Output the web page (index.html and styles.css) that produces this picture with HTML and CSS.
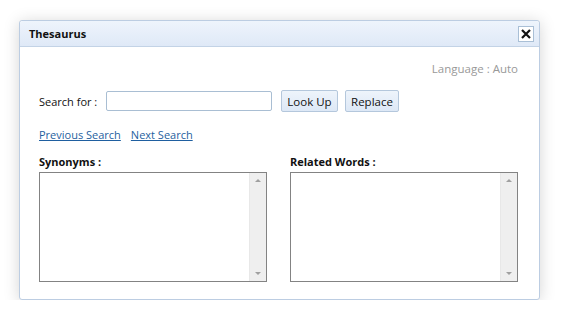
FILE: index.html
```html
<!DOCTYPE html>
<html lang="en">
<head>
  <meta charset="UTF-8">
  <title>Thesaurus</title>
  <link rel="stylesheet" href="styles.css">
</head>
<body>

<div class="dialog">
  <div class="dialog-head">
    <span class="dialog-title">Thesaurus</span>
    <button class="close-btn" title="Close">
      <svg width="10" height="10" viewBox="0 0 10 10"><path d="M1 1 L9 9 M9 1 L1 9" stroke="#111" stroke-width="2.2"/></svg>
    </button>
  </div>

  <div class="dialog-body">
    <div class="lang-row">Language : Auto</div>

    <div class="search-row">
      <label for="term">Search for :</label>
      <input id="term" type="text">
      <button class="btn btn-lookup">Look Up</button>
      <button class="btn btn-replace">Replace</button>
    </div>

    <div class="nav-links">
      <a href="#">Previous Search</a>
      <a href="#">Next Search</a>
    </div>

    <div class="lists">
      <div class="list-col">
        <div class="list-label">Synonyms :</div>
        <div class="listbox">
          <div class="listbox-content"></div>
          <div class="scrollbar"><span class="arrow up"></span><span class="arrow down"></span></div>
        </div>
      </div>
      <div class="list-col">
        <div class="list-label">Related Words :</div>
        <div class="listbox">
          <div class="listbox-content"></div>
          <div class="scrollbar"><span class="arrow up"></span><span class="arrow down"></span></div>
        </div>
      </div>
    </div>
  </div>
</div>

</body>
</html>
```

FILE: styles.css
```css
body {
  margin: 0;
  padding: 20px 0 0 19px;
  background: #fff;
  font-family: "Open Sans", "Noto Sans", sans-serif;
  font-size: 11px;
  color: #111;
}

.dialog {
  width: 519px;
  height: 278px;
  border: 1px solid #bccde2;
  border-radius: 3px;
  background: #fff;
  box-shadow: 0 2px 16px rgba(0, 0, 0, 0.17);
}

.dialog-head {
  height: 25px;
  display: flex;
  align-items: center;
  justify-content: space-between;
  padding: 0 5px 0 9px;
  border-bottom: 1px solid #c3d3e6;
  background: linear-gradient(#eef4fc, #dfe9f7);
  border-radius: 3px 3px 0 0;
}

.dialog-title {
  font-weight: bold;
  font-size: 11px;
  color: #111;
}

.close-btn {
  width: 16px;
  height: 16px;
  padding: 0;
  border: 1px solid #a9bfd6;
  background: #fff;
  display: flex;
  align-items: center;
  justify-content: center;
  cursor: pointer;
}

.dialog-body {
  padding: 14px 21px 0 19px;
}

.lang-row {
  text-align: right;
  color: #999;
  font-size: 11.5px;
  height: 16px;
  line-height: 16px;
}

.search-row {
  display: flex;
  align-items: center;
  margin-top: 13px;
}

.search-row label {
  width: 67px;
}

.search-row input {
  width: 160px;
  height: 18px;
  padding: 0 2px;
  margin: 0 9px 0 0;
  border: 1px solid #a9bed3;
  border-radius: 2px;
  font: inherit;
}

.btn {
  height: 22px;
  padding: 0;
  margin-right: 7px;
  border: 1px solid #b4c7dc;
  border-radius: 2px;
  background: linear-gradient(#eef4fb, #dde8f6);
  font: inherit;
  font-size: 11.5px;
  color: #111;
  text-align: center;
}

.btn-lookup {
  width: 57px;
}

.btn-replace {
  width: 54px;
}

.nav-links {
  margin-top: 15px;
  display: flex;
  gap: 10px;
}

.nav-links a {
  color: #1f5fa0;
  font-size: 11px;
}

.lists {
  display: flex;
  gap: 23px;
  margin-top: 12px;
}

.list-col {
  width: 228px;
}

.list-label {
  font-weight: bold;
  height: 15px;
  line-height: 15px;
  margin-bottom: 3px;
}

.listbox {
  height: 108px;
  border: 1px solid #838383;
  display: flex;
}

.listbox-content {
  flex: 1;
}

.scrollbar {
  width: 16px;
  background: #efefef;
  border-left: 1px solid #e8e8e8;
  display: flex;
  flex-direction: column;
  justify-content: space-between;
  align-items: center;
  padding: 6px 0;
}

.arrow {
  width: 0;
  height: 0;
  border-left: 3px solid transparent;
  border-right: 3px solid transparent;
}

.arrow.up {
  border-bottom: 3px solid #a0a0a0;
}

.arrow.down {
  border-top: 3px solid #a0a0a0;
}
```
